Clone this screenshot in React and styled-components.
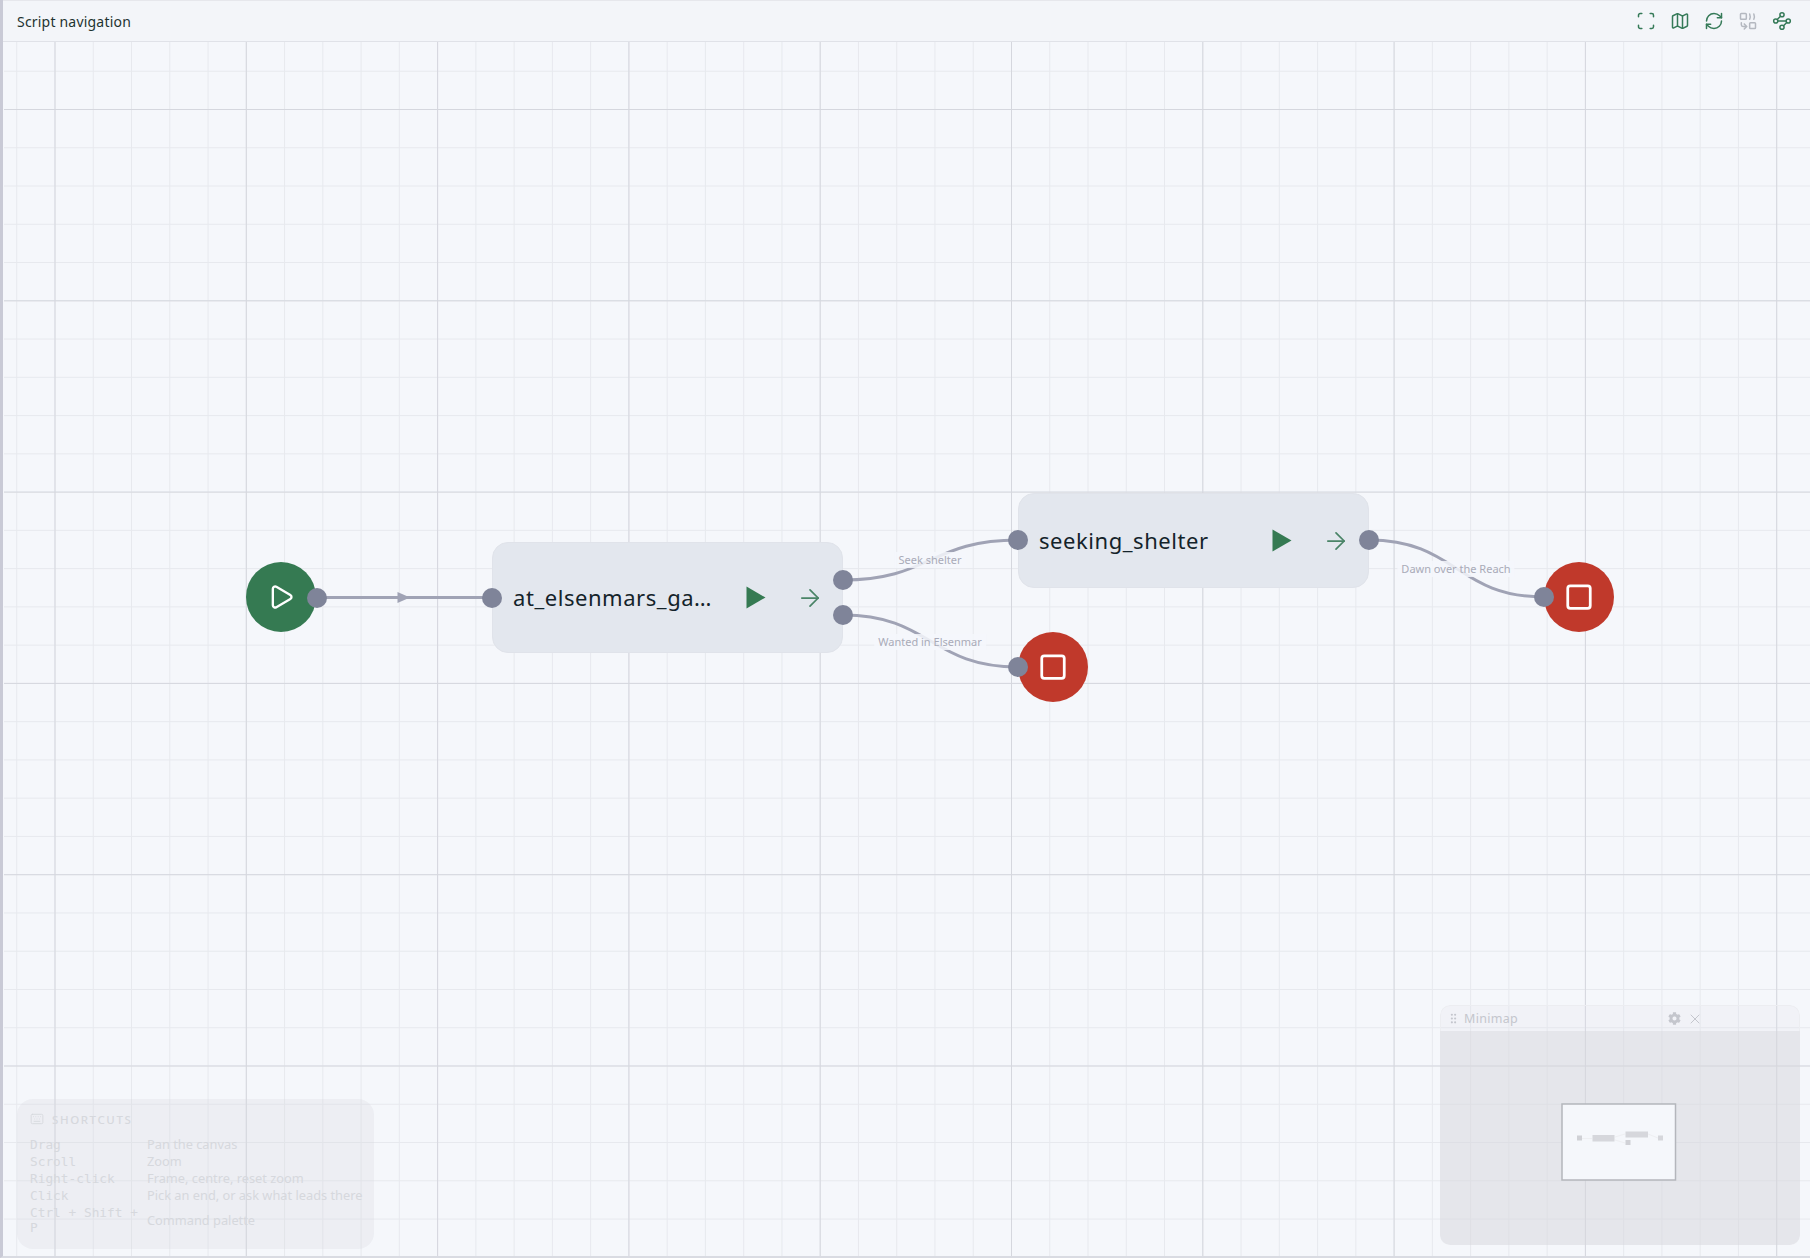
import React from 'react';
import styled, { createGlobalStyle } from 'styled-components';
import { Scan, Map as MapIcon, RefreshCw, Waypoints, Play, Square, ArrowRight, Keyboard, GripVertical, X } from 'lucide-react';
import { FaCog } from 'react-icons/fa';

const Global = createGlobalStyle`
  html, body { margin: 0; padding: 0; background: #f5f7fb; }
  body { font-family: "Noto Sans", sans-serif; }
  * { box-sizing: border-box; }
`;
const Page = styled.div`
  width: 1810px; height: 1258px; display: flex; flex-direction: column;
  border-left: 3px solid #c9cad6; border-bottom: 2px solid #d9dbe2;
  background: #f5f7fb; overflow: hidden; position: relative;
`;
const Header = styled.header`
  height: 42px; flex: none; display: flex; align-items: center; justify-content: space-between;
  padding: 0 18px 0 14px; background: #f3f5f9; border-bottom: 1px solid #e0e2e8;
  border-top: 1px solid #e6e7ec;
`;
const Title = styled.h1`
  margin: 0; font-size: 14px; font-weight: 400; color: #1e3330; letter-spacing: 0.2px;
`;
const Tools = styled.div`display: flex; gap: 14px; align-items: center;`;
const Tool = styled.button`
  width: 20px; height: 20px; padding: 0; border: 0; background: none; display: flex;
  align-items: center; justify-content: center; color: ${p => (p.$muted ? '#b4b8c0' : '#357a58')};
`;
const Canvas = styled.main`
  flex: 1; position: relative; margin-left: 1px;
  background-color: #f5f7fb;
`;
const GridLayer = styled.svg`position: absolute; inset: 0; width: 100%; height: 100%;`;
const Node = styled.div`
  position: absolute; display: flex; align-items: center; padding-left: 20px;
  background: #e3e7ee; border: 1px solid #e0e3ea; border-radius: 16px;
`;
const NodeLabel = styled.span`
  flex: 1; min-width: 0; font-size: 22px; color: #14232a; white-space: nowrap; margin: 0 28px 1px 0;
  overflow: hidden; text-overflow: ellipsis; letter-spacing: 0.55px;
`;
const NodeActions = styled.div`
  flex: none; width: 96px; display: flex; align-items: center; color: #357a52;
`;
const PlayGlyph = styled.svg`width: 20px; height: 23px; flex: none; fill: #357a52;`;
const Forward = styled.span`display: flex; margin-left: 29.5px; color: #4a8467;`;
const Circle = styled.div`
  position: absolute; width: 70px; height: 70px; border-radius: 50%; display: flex;
  align-items: center; justify-content: center; color: #fff; background: ${p => p.$bg};
`;
const Handle = styled.span`
  position: absolute; width: 20px; height: 20px; margin: -10px 0 0 -10px; border-radius: 50%;
  background: #7f8499; z-index: 3;
`;
const EdgeLayer = styled.svg`position: absolute; inset: 0; width: 100%; height: 100%; z-index: 1;`;
const EdgeLabel = styled.span`
  position: absolute; transform: translate(-50%, -50%); font-size: 11px; line-height: 16px;
  padding: 0 4px; color: #a9abb8; background: rgba(245, 247, 251, 0.85); white-space: nowrap; z-index: 2;
`;
const Shortcuts = styled.aside`
  position: absolute; left: 13px; bottom: 7px; width: 357px; height: 150px; padding: 12px 13px;
  background: rgba(214, 216, 222, 0.28); border-radius: 16px; z-index: 4; color: #d6d8dd;
`;
const ShortcutsHead = styled.div`
  display: flex; align-items: center; gap: 8px; font-size: 11.5px; letter-spacing: 1.6px; height: 16px;
  font-weight: 500; margin-bottom: 9px;
`;
const ShortcutGrid = styled.dl`
  margin: 0; display: grid; grid-template-columns: 117px 1fr; align-items: center;
`;
const Key = styled.dt`
  font-family: "DejaVu Sans Mono", monospace; font-size: 12.8px; line-height: 15px; padding: 1px 0; padding-right: 4px;
`;
const Desc = styled.dd`margin: 0; font-size: 12.8px; line-height: 15px; white-space: nowrap;`;
const Minimap = styled.aside`
  position: absolute; right: 10px; bottom: 11px; width: 360px; height: 240px; z-index: 4;
  display: flex; flex-direction: column; border-radius: 10px; overflow: hidden;
`;
const MiniHead = styled.div`
  height: 26px; flex: none; display: flex; align-items: center; padding: 0 8px 0 6px; gap: 4px;
  font-size: 12.5px; color: #c4c6cd; background: rgba(225, 227, 233, 0.2);
  border: 1px solid #ecedf1; border-bottom: 0; border-radius: 10px 10px 0 0;
`;
const MiniTitle = styled.span`flex: 1; letter-spacing: 0.3px;`;
const MiniActions = styled.div`display: flex; align-items: center; gap: 6px; margin-right: 88px;`;
const MiniBody = styled.svg`flex: 1; display: block; width: 100%;`;

const W = 1806, H = 1215, m = 38.26, M = 191.3, ox = 51 , oy = 67.5;
const range = (start, step, max) => { const a = []; for (let v = start; v < max; v += step) a.push(v); return a; };

function Grid() {
  return (
    <GridLayer aria-hidden>
      {range(ox % m, m, W).map(x => <line key={'v' + x} x1={x} x2={x} y1={0} y2={H} stroke="#e7e9ee" strokeWidth="1" />)}
      {range(oy % m, m, H).map(y => <line key={'h' + y} x1={0} x2={W} y1={y} y2={y} stroke="#e7e9ee" strokeWidth="1" />)}
      {range(ox, M, W).map(x => <line key={'V' + x} x1={x} x2={x} y1={0} y2={H} stroke="#d5d7de" strokeWidth="1" />)}
      {range(oy, M, H).map(y => <line key={'H' + y} x1={0} x2={W} y1={y} y2={y} stroke="#d5d7de" strokeWidth="1" />)}
    </GridLayer>
  );
}

const X0 = 4, Y0 = 42;
const at = (x, y) => ({ left: x - X0, top: y - Y0 });

function Edges() {
  const t = (x, y) => `${x - X0} ${y - Y0}`;
  const stroke = { fill: 'none', stroke: '#a0a3b5', strokeWidth: 3 };
  return (
    <EdgeLayer aria-hidden>
      <path {...stroke} d={`M${t(326, 597.5)} L${t(483, 597.5)}`} />
      <path d={`M${t(397.5, 592)} L${t(410, 597.5)} L${t(397.5, 603)} Z`} fill="#a0a3b5" />
      <path {...stroke} d={`M${t(843, 580)} C${t(930, 580)} ${t(931, 540)} ${t(1018, 540)}`} />
      <path {...stroke} d={`M${t(843, 615)} C${t(930, 615)} ${t(931, 667)} ${t(1018, 667)}`} />
      <path {...stroke} d={`M${t(1369, 540)} C${t(1456, 540)} ${t(1457, 597)} ${t(1544, 597)}`} />
    </EdgeLayer>
  );
}

const Triangle = () => (
  <PlayGlyph viewBox="0 0 20 23"><path d="M0.5 0.5 L19.5 11.5 L0.5 22.5 Z" /></PlayGlyph>
);

const StoryNode = ({ x, y, w, h, label }) => (
  <Node style={{ ...at(x, y), width: w, height: h }}>
    <NodeLabel>{label}</NodeLabel>
    <NodeActions>
      <Triangle />
      <Forward><ArrowRight size={28} strokeWidth={1.5} /></Forward>
    </NodeActions>
  </Node>
);

const shortcuts = [
  ['Drag', 'Pan the canvas'],
  ['Scroll', 'Zoom'],
  ['Right-click', 'Frame, centre, reset zoom'],
  ['Click', 'Pick an end, or ask what leads there'],
  ['Ctrl + Shift + P', 'Command palette'],
];

function MinimapView() {
  const t = (x, y, w, h) => ({ x: x - 1440, y: y - 1031, width: w, height: h });
  return (
    <MiniBody viewBox="0 0 360 214" aria-hidden>
      <path d="M0 0H360V206a8 8 0 0 1-8 8H8a8 8 0 0 1-8-8Z" fill="rgba(214,215,220,0.52)" />
      <rect {...t(1562, 1104, 113.5, 76)} fill="#f5f7fb" stroke="#b4b6bc" strokeWidth="1.5" />
      <rect {...t(1577, 1135.5, 5, 5)} fill="#d0d1d6" />
      <rect {...t(1592.5, 1135, 22, 6.5)} fill="#d6d7dc" />
      <rect {...t(1625.5, 1131.5, 22.5, 6)} fill="#d6d7dc" />
      <rect {...t(1625.5, 1140, 5, 5)} fill="#d0d1d6" />
      <rect {...t(1658, 1135.5, 5, 5)} fill="#d6d7dc" />
      <path d="M142 107.5H152M175 106L185 103M175 109L185 112M208 103L218 107" stroke="#eeeff2" fill="none" />
    </MiniBody>
  );
}

export default function App() {
  return (
    <Page>
      <Global />
      <Header>
        <Title>Script navigation</Title>
        <Tools>
          <Tool><Scan size={20} strokeWidth={1.8} /></Tool>
          <Tool><MapIcon size={20} strokeWidth={1.8} /></Tool>
          <Tool><RefreshCw size={20} strokeWidth={1.8} /></Tool>
          <Tool $muted>
            <svg width="20" height="20" viewBox="0 0 24 24" fill="none" stroke="currentColor" strokeWidth="1.8" strokeLinecap="round" strokeLinejoin="round">
              <rect x="3" y="3" width="7" height="7" rx="1" />
              <path d="M14 3.5c.8 2 .8 4.5 0 6.5M19 3.5c.8 2 .8 4.5 0 6.5" />
              <rect x="14" y="14" width="7" height="7" rx="1" />
              <path d="M4 14v2.5a2 2 0 0 0 2 2h4M7.5 15.5l3 3-3 3" />
            </svg>
          </Tool>
          <Tool><Waypoints size={20} strokeWidth={1.8} /></Tool>
        </Tools>
      </Header>
      <Canvas>
        <Grid />
        <Edges />
        <Circle $bg="#357a52" style={at(246, 562)}><Play size={28} strokeWidth={2} /></Circle>
        <Handle style={at(316.5, 597.5)} />
        <StoryNode x={492} y={542} w={351} h={111} label="at_elsenmars_gate_arrival" />
        <Handle style={at(492, 597.5)} />
        <Handle style={at(843, 580)} />
        <Handle style={at(843, 615)} />
        <EdgeLabel style={at(930, 560)}>Seek shelter</EdgeLabel>
        <EdgeLabel style={at(930, 642)}>Wanted in Elsenmar</EdgeLabel>
        <StoryNode x={1018} y={493} w={351} h={95} label="seeking_shelter" />
        <Handle style={at(1018, 540)} />
        <Handle style={at(1369, 540)} />
        <EdgeLabel style={at(1456, 569)}>Dawn over the Reach</EdgeLabel>
        <Circle $bg="#c0392b" style={at(1018, 632)}><Square size={30} strokeWidth={2.2} /></Circle>
        <Handle style={at(1018, 667)} />
        <Circle $bg="#c0392b" style={at(1544, 562)}><Square size={30} strokeWidth={2.2} /></Circle>
        <Handle style={at(1544, 597)} />
        <Shortcuts>
          <ShortcutsHead><Keyboard size={14} strokeWidth={1.5} />SHORTCUTS</ShortcutsHead>
          <ShortcutGrid>
            {shortcuts.map(([k, d]) => (
              <React.Fragment key={k}>
                <Key>{k}</Key>
                <Desc>{d}</Desc>
              </React.Fragment>
            ))}
          </ShortcutGrid>
        </Shortcuts>
        <Minimap>
          <MiniHead>
            <GripVertical size={13} strokeWidth={2} />
            <MiniTitle>Minimap</MiniTitle>
            <MiniActions>
              <FaCog size={13} />
              <X size={16} strokeWidth={1.5} />
            </MiniActions>
          </MiniHead>
          <MinimapView />
        </Minimap>
      </Canvas>
    </Page>
  );
}
